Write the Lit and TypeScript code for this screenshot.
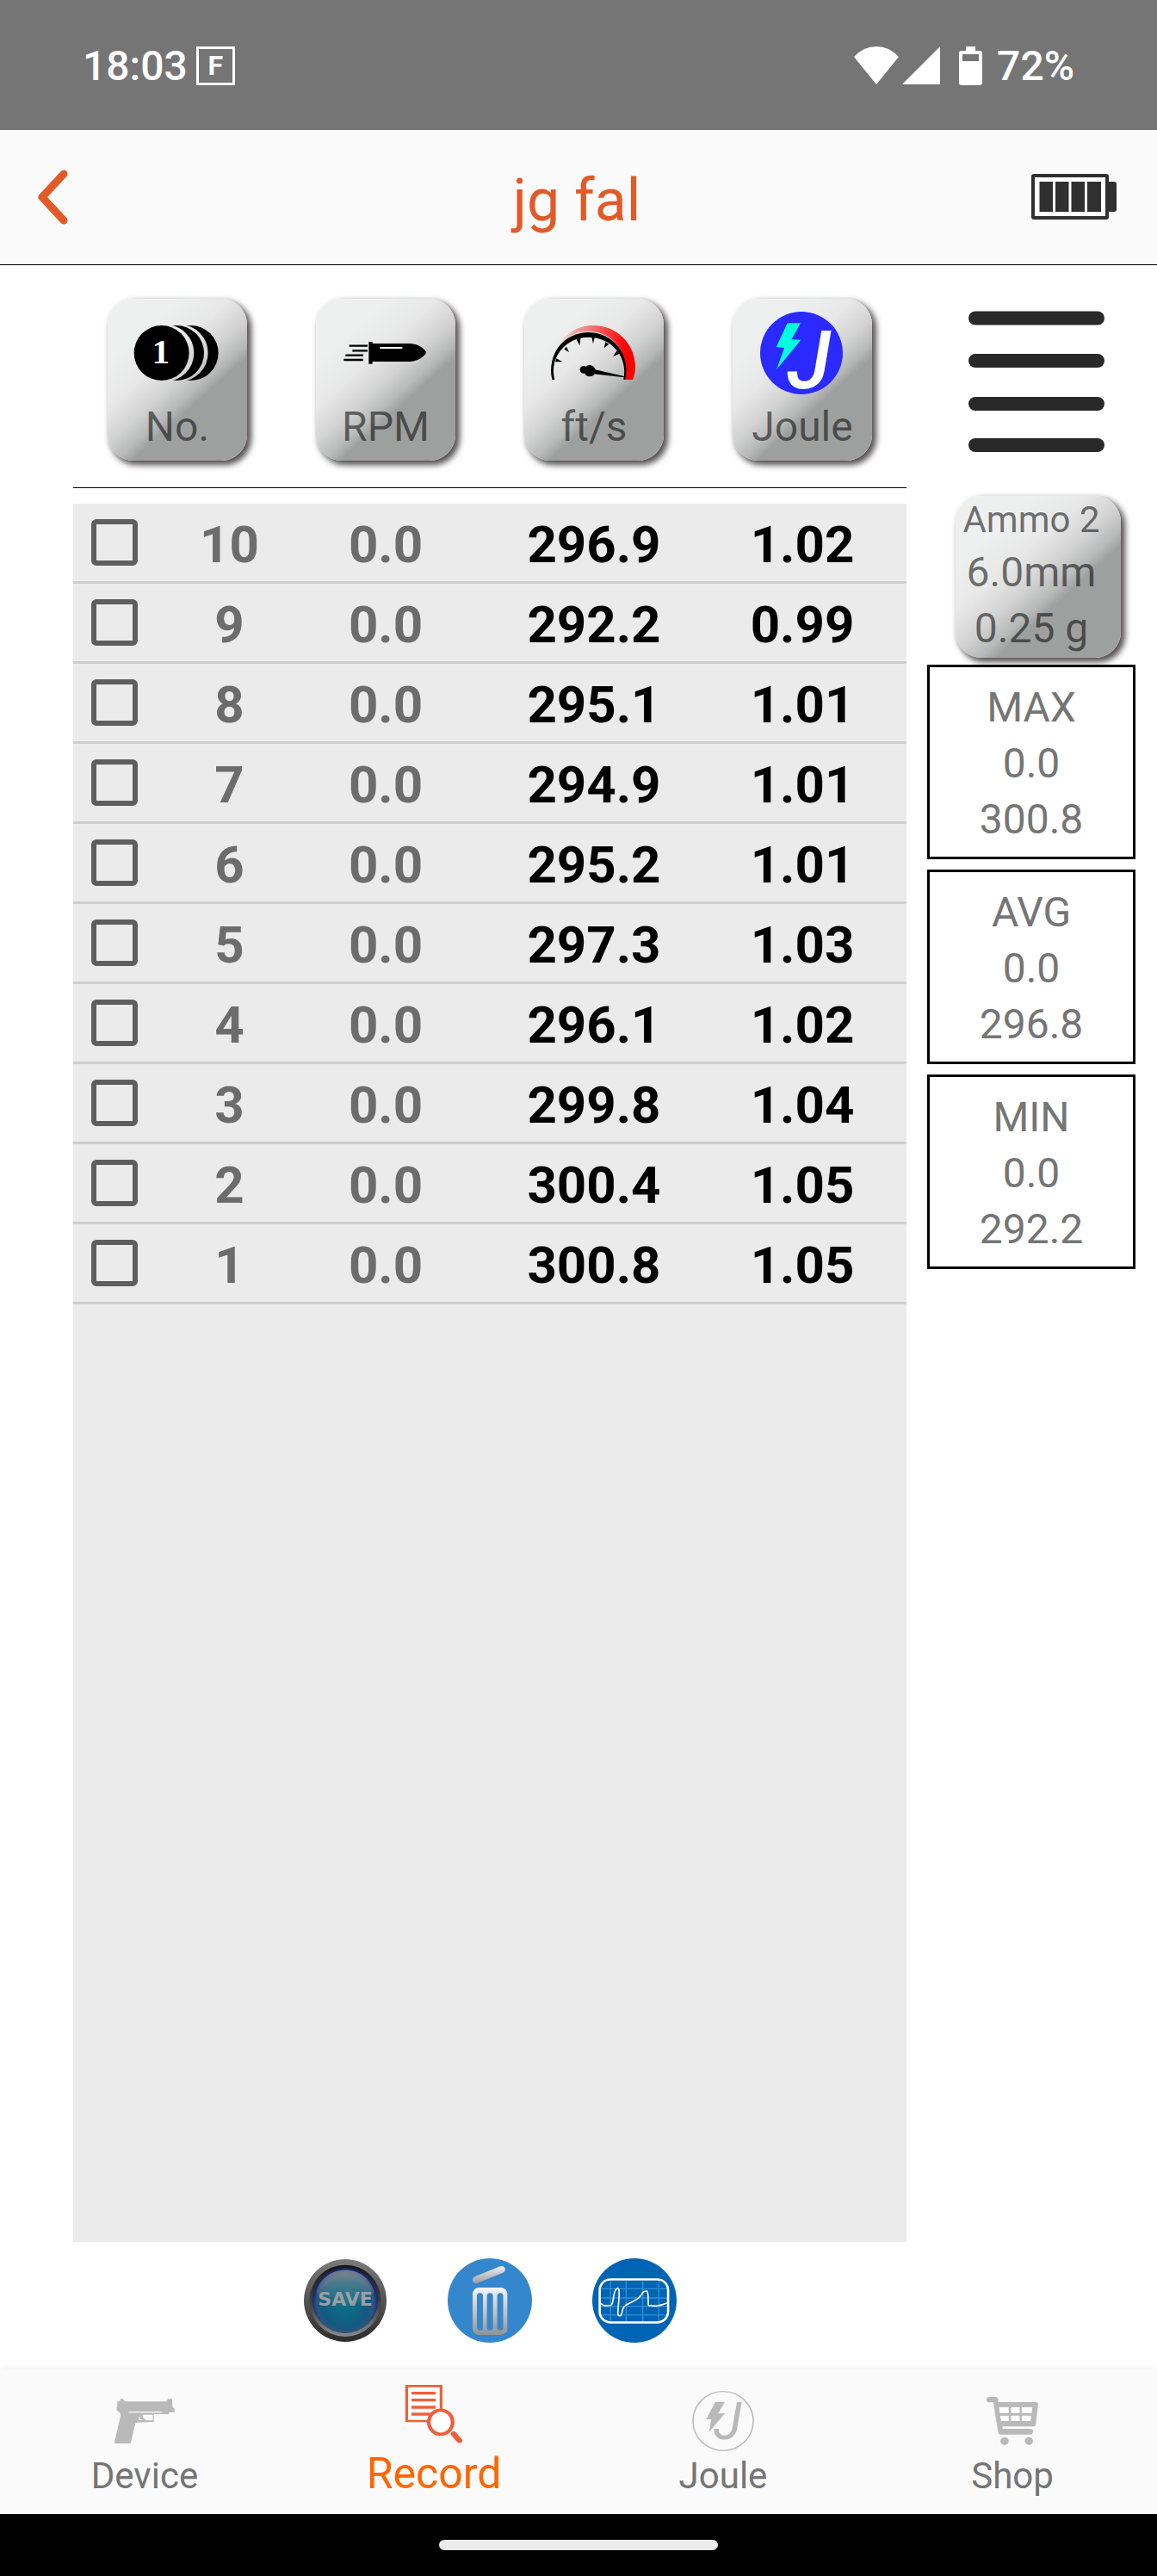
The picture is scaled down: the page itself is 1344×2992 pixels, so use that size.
import { LitElement, html, css, svg } from "lit";
import { customElement, state } from "lit/decorators.js";

interface Shot {
  no: number;
  rpm: string;
  speed: string;
  joule: string;
}

const SHOTS: Shot[] = [
  { no: 10, rpm: "0.0", speed: "296.9", joule: "1.02" },
  { no: 9, rpm: "0.0", speed: "292.2", joule: "0.99" },
  { no: 8, rpm: "0.0", speed: "295.1", joule: "1.01" },
  { no: 7, rpm: "0.0", speed: "294.9", joule: "1.01" },
  { no: 6, rpm: "0.0", speed: "295.2", joule: "1.01" },
  { no: 5, rpm: "0.0", speed: "297.3", joule: "1.03" },
  { no: 4, rpm: "0.0", speed: "296.1", joule: "1.02" },
  { no: 3, rpm: "0.0", speed: "299.8", joule: "1.04" },
  { no: 2, rpm: "0.0", speed: "300.4", joule: "1.05" },
  { no: 1, rpm: "0.0", speed: "300.8", joule: "1.05" },
];

const STATS = [
  { name: "MAX", rpm: "0.0", speed: "300.8" },
  { name: "AVG", rpm: "0.0", speed: "296.8" },
  { name: "MIN", rpm: "0.0", speed: "292.2" },
];

const countIcon = html`<svg viewBox="217 120 330 300" aria-hidden="true">
  <defs>
    <mask id="m2"><rect x="217" y="120" width="330" height="300" fill="#fff" /><circle cx="341" cy="270" r="99" fill="#000" /></mask>
    <mask id="m3"><rect x="217" y="120" width="330" height="300" fill="#fff" /><circle cx="390" cy="270" r="99" fill="#000" /></mask>
  </defs>
  <circle cx="429" cy="270" r="96" mask="url(#m3)" />
  <circle cx="379" cy="270" r="96" mask="url(#m2)" />
  <circle cx="327" cy="270" r="96" />
  <text x="325" y="305" font-family="Liberation Serif, serif" font-weight="700" font-size="122" text-anchor="middle" fill="#fff">1</text>
</svg>`;

const bulletIcon = html`<svg viewBox="941 120 330 300" aria-hidden="true">
  <path d="M979 245h64M990 262h53M966 278h62M960 294h68" stroke="#000" stroke-width="7" />
  <path d="M1047 231h13v6h132c26 2 46 14 56 31-10 18-30 30-56 32h-132v8h-13z" />
  <path d="M1086 252h78" stroke="#fff" stroke-width="6" />
</svg>`;

const gaugeIcon = html`<svg viewBox="228 120 330 300" aria-hidden="true">
  <defs>
    <linearGradient id="red" x1="265" x2="505" y1="0" y2="0" gradientUnits="userSpaceOnUse">
      <stop offset="0" stop-color="#f00" stop-opacity="0" />
      <stop offset=".35" stop-color="#ff2020" stop-opacity=".45" />
      <stop offset="1" stop-color="#f00" />
    </linearGradient>
  </defs>
  <path d="M262 258C284 206 333 174 390 174c84 0 147 66 147 146 0 16-4 30-9 43h-28c3-10 4-22 4-34 0-76-58-135-130-135-48 0-90 26-112 64z" fill="url(#red)" />
  <path d="M247 363C228 274 288 198 374 198s148 78 128 165h-6c17-80-42-148-122-148S236 285 256 363z" />
  <path d="M331 221l15-3-3 26zM385 215h10l-5 23zM433 232l12 7-17 14zM473 262l9 10-23 11zM289 257l8-9 9 19zM258 301l4-12 21 12zM494 300l6 2z" />
  <circle cx="378" cy="332" r="20" /><circle cx="357" cy="328" r="13" />
  <path d="M394 327l107 25-3 3-108-12z" />
</svg>`;

const jouleIcon = html`<svg viewBox="954 120 330 300" aria-hidden="true">
  <circle cx="1116" cy="270" r="144" fill="#2a2aff" />
  <path d="M1067 166h46l-32 57 33 1-85 104 27-76-28-3z" fill="#00ffdd" />
  <text x="1066" y="392" font-family="Roboto, sans-serif" font-style="italic" font-weight="500" font-size="282" fill="#fff">J</text>
</svg>`;

const saveIcon = html`<svg viewBox="96 129 294 294" aria-hidden="true">
  <defs>
    <linearGradient id="rim" x2="0" y2="1"><stop offset="0" stop-color="#7b7b7b" /><stop offset="1" stop-color="#2c2c2c" /></linearGradient>
    <linearGradient id="lip" x2="0" y2="1"><stop offset="0" stop-color="#151515" /><stop offset=".6" stop-color="#484848" /><stop offset="1" stop-color="#8a8a8a" /></linearGradient>
    <radialGradient id="lens" cy=".55"><stop offset="0" stop-color="#0c7288" /><stop offset=".72" stop-color="#135a80" /><stop offset=".88" stop-color="#2a5480" /><stop offset="1" stop-color="#152a70" /></radialGradient>
    <linearGradient id="shine" x2="0" y2="1"><stop offset="0" stop-color="#9a9a9a" stop-opacity=".75" /><stop offset="1" stop-color="#6a9a9a" stop-opacity=".05" /></linearGradient>
  </defs>
  <circle cx="243" cy="276" r="144" fill="url(#rim)" />
  <circle cx="243" cy="277" r="125" fill="url(#lip)" />
  <circle cx="243" cy="276" r="114" fill="url(#lens)" />
  <path d="M142 246C154 200 194 170 243 170s89 30 101 76c-20 34-62 44-101 44s-81-10-101-44z" fill="url(#shine)" />
  <text x="243" y="294" font-family="DejaVu Sans, sans-serif" font-weight="700" font-size="66" text-anchor="middle" fill="#9b9fa3">SAVE</text>
</svg>`;

const trashIcon = html`<svg viewBox="600 129 294 294" aria-hidden="true">
  <defs>
    <linearGradient id="can" x1="0" x2="0" y1="231" y2="396" gradientUnits="userSpaceOnUse"><stop offset="0" stop-color="#f5f5f7" /><stop offset="1" stop-color="#929395" /></linearGradient>
    <linearGradient id="lid" x1="0" x2="0" y1="155" y2="217" gradientUnits="userSpaceOnUse"><stop offset="0" stop-color="#f0f0f2" /><stop offset="1" stop-color="#9c9da0" /></linearGradient>
  </defs>
  <circle cx="747" cy="276" r="147" fill="#3487cc" />
  <path d="M699 204l89-36" stroke="url(#lid)" stroke-width="25" stroke-linecap="round" />
  <rect x="687" y="231" width="121" height="165" rx="22" fill="url(#can)" />
  <path d="M712.500 260v110M747.500 260v110M783 260v110" stroke="#3487cc" stroke-width="21" stroke-linecap="round" />
</svg>`;

const chartIcon = html`<svg viewBox="1104 129 296 296" fill="none" aria-hidden="true">
  <circle cx="1252" cy="277" r="148" fill="#0064b4" />
  <path d="M1168 206v146M1223 206v146M1281 206v146M1337 206v146M1132 236h236M1132 268h236M1132 298h236M1132 328h236" stroke="#2f90d6" stroke-width="4" />
  <path d="M1134 286c8 10 12 10 22 9 22 2 18-8 24-38 6-28 18-28 18-10 2 30-8 72-3 82 14 8 12-14 18-26 12-20 40-16 62-44 6-12 12-16 20-15 8 4 4 36 6 50 20 4 38 2 50-3 6-3 10-4 16-5" stroke="#fff" stroke-width="5" />
  <rect x="1130" y="203" width="240" height="151" rx="38" stroke="#fff" stroke-width="8" />
</svg>`;

const TABS = [
  {
    label: "Device",
    icon: svg`<g transform="translate(-66 -28) scale(.3954 .3333)">
      <path fill="#b9b9b9" d="M202 139h7l6 9h122l5-9h12l1 29 6 5v12h-16l-1 7h-44v27l-48 2q-7 1-7 8l-13 65h-46q-2-3 0-12l16-82q2-14-6-16l-5-7v-9l2-2v-19h9z" />
      <path fill="#fafafa" d="M226 183h99v4h-99zM257 197q2 14 12 16h-14zM267 194h30v20h-19q-9-6-11-20z" />
    </g>`,
  },
  {
    label: "Record",
    icon: svg`<g transform="translate(-402 -28) scale(.3954 .3333)">
      <path fill="#fff" stroke="#f05f3a" stroke-width="8" d="M1043 94h101v122h-101z" />
      <path stroke="#f05f3a" stroke-width="10" d="M1057 119h71M1057 143h71M1057 168h71M1057 192h60" />
      <ellipse cx="1143" cy="220" rx="35" ry="42" fill="#fff" stroke="#f05f3a" stroke-width="11" />
      <path stroke="#f05f3a" stroke-width="17" stroke-linecap="round" d="M1181 261l17 23" />
    </g>`,
  },
  {
    label: "Joule",
    icon: svg`<g transform="translate(-78 -28) scale(.398 .3333)">
      <ellipse cx="301.500" cy="216" rx="88" ry="103" fill="none" stroke="#b9b9b9" stroke-width="4" />
      <path fill="#b9b9b9" d="M279 149h28l-20 40h20l-47 67 7-46h-15z" />
    </g>
    <text x="31" y="65" font-family="Roboto, sans-serif" font-style="italic" font-size="61" fill="#b9b9b9">J</text>`,
  },
  {
    label: "Shop",
    icon: svg`<g transform="translate(-414 -28) scale(.398 .3333)">
      <path fill="#b9b9b9" d="M1077 132h20q6 0 7 7l1 11h109q7 0 7 8l-7 69q-1 8-7 8h-90v8h81q8 0 8 9t-8 11h-86q-7 0-8-8l-14-104h-13q-7 0-7-9t7-10z" />
      <path fill="#fff" d="M1107 168h28v20h-26zM1142 168h25v20h-25zM1173 168h31l-2 20h-29zM1110 197h25v19h-22zM1142 197h25v19h-25zM1173 197h28l-2 19h-26z" />
      <ellipse cx="1123" cy="286" rx="12" ry="14" fill="#b9b9b9" /><ellipse cx="1194" cy="286" rx="12" ry="14" fill="#b9b9b9" />
    </g>`,
  },
];

@customElement("status-strip")
class StatusStrip extends LitElement {
  static styles = css`
    :host {
      display: flex;
      align-items: center;
      height: 151px;
      padding: 2px 96px 0;
      box-sizing: border-box;
      background: #757575;
      color: #fff;
      font: 500 48px/56px Roboto, sans-serif;
    }
    .badge {
      width: 45px;
      height: 45px;
      box-sizing: border-box;
      margin-left: 10px;
      border: 3px solid #fff;
      font-size: 32px;
      font-weight: 700;
      line-height: 39px;
      text-align: center;
    }
    .icons {
      margin-left: auto;
      margin-right: 16px;
      width: 150px;
      height: 46px;
    }
  `;
  render() {
    return html`<span>18:03</span><span class="badge">F</span>
      <svg class="icons" viewBox="994 54 150 46" fill="#fff" role="img" aria-label="Wi-Fi, signal, battery">
        <path d="M994 66q11-12 26-12t26 12l-26 32z" />
        <path d="M1050 98l44-44v44z" />
        <path fill-rule="evenodd" d="M1124 54h11v5h5q3 0 3 3v34q0 3-3 3h-21q-3 0-3-3v-34q0-3 3-3h5zM1120 63v8h19v-8z" />
      </svg>
      <span>72%</span>`;
  }
}

@customElement("app-root")
class AppRoot extends LitElement {
  @state() private selected = new Set<number>();
  @state() private tab = "Record";

  static styles = css`
    :host {
      display: flex;
      flex-direction: column;
      min-height: 100vh;
      background: #fff;
      color: #757575;
      font: 48px/65px Roboto, sans-serif;
    }
    svg {
      display: block;
      overflow: visible;
    }
    button {
      margin: 0;
      padding: 0;
      border: 0;
      background: none;
      color: inherit;
      font: inherit;
      cursor: pointer;
    }
    .bar {
      display: grid;
      grid-template-columns: 1fr auto 1fr;
      align-items: center;
      height: 157px;
      box-sizing: border-box;
      padding: 0 46px 0 42px;
      border-bottom: 1px solid #000;
      background: #fafafa;
    }
    .back,
    .back svg {
      width: 36px;
      height: 64px;
    }
    .title {
      margin: 0;
      padding-top: 8px;
      color: #e25a26;
      font-size: 68px;
      font-weight: 400;
      line-height: 80px;
    }
    .battery {
      width: 100px;
      height: 54px;
      justify-self: end;
    }
    .main {
      flex: 1;
      display: grid;
      grid-template-columns: minmax(0, 1fr) 242px;
      column-gap: 24px;
      padding: 39px 25px 0 85px;
    }
    .log {
      display: flex;
      flex-direction: column;
    }
    .heads {
      display: grid;
      grid-template-columns: repeat(4, 1fr);
      justify-items: center;
      padding-bottom: 31px;
      border-bottom: 1px solid #000;
    }
    .tile {
      display: flex;
      flex-direction: column;
      align-items: center;
      box-sizing: border-box;
      height: 188px;
      border-radius: 30px;
      background: linear-gradient(138deg, #eef0ef 22%, #e7e8e7 38%, #d3d3d3 50%, #b7bab8 59%, #9ea09f 64%);
      box-shadow: 4px 4px 7px 1px #555052;
      color: rgba(0, 0, 0, 0.55);
    }
    .head {
      width: 162px;
      padding-top: 13px;
    }
    .head svg {
      width: 110px;
      height: 100px;
    }
    .head span {
      line-height: 72px;
    }
    .sheet {
      flex: 1;
      margin-top: 18px;
      background: #ebebeb;
    }
    .shots {
      width: 100%;
      border-collapse: collapse;
      table-layout: fixed;
      font-size: 60px;
      font-weight: 700;
      line-height: 84px;
      text-align: center;
      color: #000;
    }
    .narrow {
      width: 12.5%;
    }
    .shots td {
      height: 90px;
      box-sizing: content-box;
      padding: 0;
      border-bottom: 3px solid #cecece;
    }
    .num {
      display: block;
      padding-top: 6px;
    }
    .dim {
      color: #6c6c6c;
    }
    .tick {
      display: block;
      appearance: none;
      width: 54px;
      height: 54px;
      margin: 0 0 0 21px;
      border: 6px solid #5e5e5e;
      border-radius: 6px;
    }
    .tick:checked {
      background: #5e5e5e;
    }
    .tools {
      display: flex;
      justify-content: center;
      gap: 70px;
      padding: 19px 0 31px;
    }
    .tools svg {
      width: 98px;
      height: 98px;
    }
    .side {
      display: flex;
      flex-direction: column;
    }
    .menu {
      width: 160px;
      height: 164px;
      margin: 14px 0 51px 47px;
    }
    .menu svg {
      width: 160px;
      height: 164px;
    }
    .ammo {
      width: 192px;
      margin: 0 0 8px 33px;
      padding-right: 16px;
      white-space: nowrap;
    }
    .ammo .name {
      font-size: 42px;
      line-height: 56px;
    }
    .stats {
      display: grid;
      gap: 12px;
    }
    .stat {
      display: flex;
      flex-direction: column;
      align-items: center;
      padding: 14px 0 11px;
      border: 3px solid #000;
    }
    .tabs {
      display: grid;
      grid-template-columns: repeat(4, 1fr);
      height: 168px;
      background: #fafafa;
      box-shadow: 0 -2px 8px rgba(0, 0, 0, 0.05);
    }
    .tab {
      display: flex;
      flex-direction: column;
      align-items: center;
      padding-top: 16px;
      color: #757575;
      font-size: 42px;
      line-height: 48px;
      text-decoration: none;
    }
    .tab.active {
      color: #ff6600;
      font-size: 50px;
      line-height: 42px;
    }
    .tab svg {
      width: 84px;
      height: 84px;
    }
    .gesture {
      display: grid;
      place-items: center;
      height: 72px;
      background: #000;
    }
    .handle {
      width: 324px;
      height: 12px;
      border-radius: 6px;
      background: #ececec;
    }
  `;

  private toggle(no: number) {
    const next = new Set(this.selected);
    if (!next.delete(no)) next.add(no);
    this.selected = next;
  }

  private pick(event: Event, label: string) {
    event.preventDefault();
    this.tab = label;
  }

  render() {
    return html`
      <status-strip></status-strip>
      <header class="bar">
        <button class="back" aria-label="Back">
          <svg viewBox="0 0 36 64" fill="none"><path d="M32 5L7 32l25 27" stroke="#e25a26" stroke-width="9" stroke-linecap="round" stroke-linejoin="round" /></svg>
        </button>
        <h1 class="title">jg fal</h1>
        <svg class="battery" viewBox="0 0 100 54" role="img" aria-label="Device battery full">
          <rect x="88" y="9" width="11" height="35" rx="3" fill="#303030" />
          <rect x="2" y="2" width="86" height="49" rx="1" fill="#fff" stroke="#303030" stroke-width="4" />
          <path d="M9.500 9h15.500v35H9.500zM28 9h15.500v35H28zM46.500 9h15.500v35H46.500zM65 9h16v35H65z" fill="#303030" />
        </svg>
      </header>
      <main class="main">
        <section class="log">
          <div class="heads">
            <button class="tile head">${countIcon}<span>No.</span></button>
            <button class="tile head">${bulletIcon}<span>RPM</span></button>
            <button class="tile head">${gaugeIcon}<span>ft/s</span></button>
            <button class="tile head">${jouleIcon}<span>Joule</span></button>
          </div>
          <div class="sheet">
            <table class="shots" aria-label="Shots">
              <colgroup><col class="narrow" /><col class="narrow" /><col /><col /><col /></colgroup>
              <tbody>
                ${SHOTS.map(
                  (s) => html`<tr>
                    <td><input class="tick" type="checkbox" aria-label="Select shot ${s.no}" .checked=${this.selected.has(s.no)} @change=${() => this.toggle(s.no)} /></td>
                    <td class="dim"><span class="num">${s.no}</span></td>
                    <td class="dim"><span class="num">${s.rpm}</span></td>
                    <td><span class="num">${s.speed}</span></td>
                    <td><span class="num">${s.joule}</span></td>
                  </tr>`
                )}
              </tbody>
            </table>
          </div>
          <div class="tools">
            <button aria-label="Save">${saveIcon}</button>
            <button aria-label="Delete">${trashIcon}</button>
            <button aria-label="Chart">${chartIcon}</button>
          </div>
        </section>
        <aside class="side">
          <button class="menu" aria-label="Menu">
            <svg viewBox="0 0 160 164"><path d="M9 8.500h142M9 58h142M9 108h142M9 156h142" stroke="#292929" stroke-width="16" stroke-linecap="round" /></svg>
          </button>
          <button class="tile ammo"><span class="name">Ammo 2</span><span>6.0mm</span><span>0.25 g</span></button>
          <div class="stats">
            ${STATS.map((s) => html`<div class="stat"><span>${s.name}</span><span>${s.rpm}</span><span>${s.speed}</span></div>`)}
          </div>
        </aside>
      </main>
      <nav class="tabs">
        ${TABS.map(
          (t) => html`<a class="tab ${t.label === this.tab ? "active" : ""}" href="#${t.label.toLowerCase()}" @click=${(e: Event) => this.pick(e, t.label)}>
            <svg viewBox="0 0 84 84" aria-hidden="true">${t.icon}</svg><span>${t.label}</span>
          </a>`
        )}
      </nav>
      <div class="gesture"><span class="handle"></span></div>
    `;
  }
}
